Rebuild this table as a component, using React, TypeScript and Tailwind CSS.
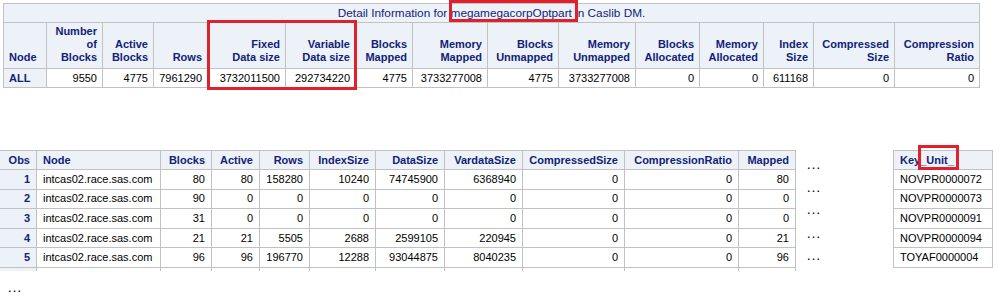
import React from "react";

const topCols = [43, 56, 51, 54, 78, 70, 57, 75, 71, 77, 64, 64, 50, 81, 85];

const topHeaders: string[][] = [
    ["Node"],
    ["Number", "of", "Blocks"],
    ["Active", "Blocks"],
    ["Rows"],
    ["Fixed", "Data size"],
    ["Variable", "Data size"],
    ["Blocks", "Mapped"],
    ["Memory", "Mapped"],
    ["Blocks", "Unmapped"],
    ["Memory", "Unmapped"],
    ["Blocks", "Allocated"],
    ["Memory", "Allocated"],
    ["Index", "Size"],
    ["Compressed", "Size"],
    ["Compression", "Ratio"],
];

const topValues = [
    "9550",
    "4775",
    "7961290",
    "3732011500",
    "292734220",
    "4775",
    "3733277008",
    "4775",
    "3733277008",
    "0",
    "0",
    "611168",
    "0",
    "0",
];

const bottomCols = [37, 124, 51, 48, 50, 66, 69, 78, 102, 114, 57];

const bottomHeaders = [
    "Obs",
    "Node",
    "Blocks",
    "Active",
    "Rows",
    "IndexSize",
    "DataSize",
    "VardataSize",
    "CompressedSize",
    "CompressionRatio",
    "Mapped",
];

const bottomRows: string[][] = [
    ["1", "intcas02.race.sas.com", "80", "80", "158280", "10240", "74745900", "6368940", "0", "0", "80"],
    ["2", "intcas02.race.sas.com", "90", "0", "0", "0", "0", "0", "0", "0", "0"],
    ["3", "intcas02.race.sas.com", "31", "0", "0", "0", "0", "0", "0", "0", "0"],
    ["4", "intcas02.race.sas.com", "21", "21", "5505", "2688", "2599105", "220945", "0", "0", "21"],
    ["5", "intcas02.race.sas.com", "96", "96", "196770", "12288", "93044875", "8040235", "0", "0", "96"],
    ["", "", "", "", "", "", "", "", "", "", ""],
];

const keyUnits = ["NOVPR0000072", "NOVPR0000073", "NOVPR0000091", "NOVPR0000094", "TOYAF0000004"];

export default function App() {
    return (
        <div
            className="relative w-[998px] h-[303px] overflow-hidden bg-white text-[11px] leading-[13px] text-black"
            style={{ fontFamily: '"Liberation Sans", Arial, sans-serif' }}
        >
            {/* Detail table */}
            <div className="pt-[3px] pl-[3px]">
                <table className="table-fixed border-collapse w-[977px]">
                    <colgroup>
                        {topCols.map((w, i) => (
                            <col key={i} style={{ width: w }} />
                        ))}
                    </colgroup>
                    <thead>
                        <tr className="h-[19px]">
                            <th
                                colSpan={15}
                                className="border border-[#c1c1c1] bg-[#edf2f9] font-normal text-[11.8px] text-[#112277] text-center"
                            >
                                Detail Information for megamegacorpOptpart in Caslib DM.
                            </th>
                        </tr>
                        <tr className="h-[46px]">
                            {topHeaders.map((lines, i) => (
                                <th
                                    key={i}
                                    className={
                                        "border border-[#c1c1c1] bg-[#edf2f9] font-bold text-[#112277] align-bottom pb-[4px] px-[5px] " +
                                        (i === 0 ? "text-left" : "text-right")
                                    }
                                >
                                    {lines.map((l, j) => (
                                        <div key={j} className="whitespace-nowrap">
                                            {l}
                                        </div>
                                    ))}
                                </th>
                            ))}
                        </tr>
                    </thead>
                    <tbody>
                        <tr className="h-[19px]">
                            <th className="border border-[#c1c1c1] bg-[#edf2f9] font-bold text-[#112277] text-left px-[5px]">
                                ALL
                            </th>
                            {topValues.map((v, i) => (
                                <td key={i} className="border border-[#c1c1c1] text-right px-[5px]">
                                    {v}
                                </td>
                            ))}
                        </tr>
                    </tbody>
                </table>
            </div>

            {/* Partition listing */}
            <div className="mt-[62px] flex items-start">
                <div className="ml-[-1px] h-[121px] overflow-hidden">
                    <table className="table-fixed border-collapse w-[797px]">
                        <colgroup>
                            {bottomCols.map((w, i) => (
                                <col key={i} style={{ width: w }} />
                            ))}
                        </colgroup>
                        <thead>
                            <tr className="h-[19px]">
                                {bottomHeaders.map((h, i) => (
                                    <th
                                        key={i}
                                        className={
                                            "border border-[#c1c1c1] bg-[#edf2f9] font-bold text-[#112277] px-[6px] whitespace-nowrap " +
                                            (i === 1 ? "text-left" : "text-right")
                                        }
                                    >
                                        {h}
                                    </th>
                                ))}
                            </tr>
                        </thead>
                        <tbody>
                            {bottomRows.map((row, r) => (
                                <tr key={r} className="h-[19.6px]">
                                    {row.map((v, i) =>
                                        i === 0 ? (
                                            <th
                                                key={i}
                                                className="border border-[#c1c1c1] bg-[#edf2f9] font-bold text-[#112277] text-right px-[6px]"
                                            >
                                                {v}
                                            </th>
                                        ) : (
                                            <td
                                                key={i}
                                                className={
                                                    "border border-[#c1c1c1] px-[6px] whitespace-nowrap " +
                                                    (i === 1 ? "text-left" : "text-right")
                                                }
                                            >
                                                {v}
                                            </td>
                                        )
                                    )}
                                </tr>
                            ))}
                        </tbody>
                    </table>
                </div>

                {/* more columns */}
                <div className="ml-[10px] mt-[6px] flex flex-col text-[15px] leading-[15px] text-[#111]">
                    <div className="h-[23px]">…</div>
                    <div className="h-[22px]">…</div>
                    <div className="h-[24px]">…</div>
                    <div className="h-[22px]">…</div>
                    <div className="h-[22px]">…</div>
                </div>

                <table className="ml-[72px] table-fixed border-collapse w-[100px]">
                    <thead>
                        <tr className="h-[19px]">
                            <th className="border border-[#c1c1c1] bg-[#edf2f9] font-bold text-[#112277] text-left px-[6px]">
                                Key_Unit_
                            </th>
                        </tr>
                    </thead>
                    <tbody>
                        {keyUnits.map((k) => (
                            <tr key={k} className="h-[19.6px]">
                                <td className="border border-[#c1c1c1] text-left px-[6px]">{k}</td>
                            </tr>
                        ))}
                    </tbody>
                </table>
            </div>

            <div className="mt-[8px] ml-[7px] text-[15px] leading-[15px] text-[#111]">…</div>

            {/* highlight boxes */}
            <div className="absolute left-[207px] top-[20px] w-[150px] h-[70px] border-[3px] border-[#e0202a]" />
            <div className="absolute left-[449px] top-[0px] w-[129px] h-[22px] border-[3px] border-[#e0202a]" />
            <div className="absolute left-[918px] top-[145px] w-[41px] h-[25px] border-[3px] border-[#e0202a]" />
        </div>
    );
}
